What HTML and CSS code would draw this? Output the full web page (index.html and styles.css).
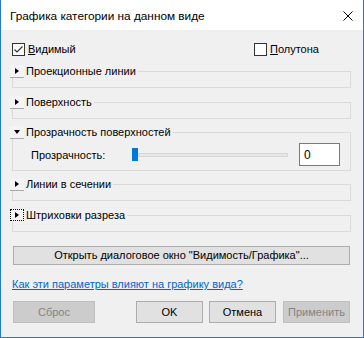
FILE: index.html
```html
<!DOCTYPE html>
<html lang="ru">
<head>
<meta charset="utf-8">
<title>Графика категории на данном виде</title>
<link rel="stylesheet" href="styles.css">
</head>
<body>
<div class="window">
  <div class="titlebar">
    <span class="title">Графика категории на данном виде</span>
    <svg class="close" width="10" height="10" viewBox="0 0 10 10"><path d="M0.5 0.5L9.5 9.5M9.5 0.5L0.5 9.5" stroke="#000" stroke-width="1" fill="none"/></svg>
  </div>
  <div class="content">
    <div class="checks">
      <label class="check">
        <span class="box"><svg width="11" height="11" viewBox="0 0 11 11"><path d="M1.5 5.5L4 8L9.5 2.5" stroke="#333" stroke-width="1.2" fill="none"/></svg></span>
        <span><u>В</u>идимый</span>
      </label>
      <label class="check">
        <span class="box"></span>
        <span><u>П</u>олутона</span>
      </label>
    </div>

    <fieldset class="group">
      <legend><span class="tog"><span class="tri-r"></span></span>Проекционные линии</legend>
    </fieldset>

    <fieldset class="group">
      <legend><span class="tog"><span class="tri-r"></span></span>Поверхность</legend>
    </fieldset>

    <fieldset class="group open tight">
      <legend><span class="tog"><span class="tri-d"></span></span>Прозрачность поверхностей</legend>
      <div class="slider-row">
        <span class="slider-label">Прозрачность:</span>
        <div class="slider">
          <span class="thumb"></span>
          <span class="track"></span>
        </div>
        <div class="numbox">0</div>
      </div>
    </fieldset>

    <fieldset class="group tight">
      <legend><span class="tog"><span class="tri-r"></span></span>Линии в сечении</legend>
    </fieldset>

    <fieldset class="group">
      <legend><span class="tog focus"><span class="tri-r"></span></span>Штриховки разреза</legend>
    </fieldset>

    <div class="btn wide">Открыть диалоговое окно "Видимость/Графика"...</div>

    <div class="link-row"><span class="link">Как эти параметры влияют на графику вида?</span></div>

    <div class="actions">
      <div class="btn disabled reset">Сброс</div>
      <div class="spacer"></div>
      <div class="btn ok">OK</div>
      <div class="btn cancel">Отмена</div>
      <div class="btn disabled apply">Применить</div>
    </div>
  </div>
</div>
</body>
</html>
```
FILE: styles.css
```css
* { box-sizing: border-box; }
html, body { margin: 0; padding: 0; }
body {
  width: 364px;
  height: 338px;
  font-family: "Segoe UI", "Liberation Sans", Arial, sans-serif;
  font-size: 11px;
  color: #000;
  background: #f0f0f0;
}
.window {
  width: 364px;
  height: 338px;
  border: 1px solid #1f7ad2;
  border-top: none;
  background: #f0f0f0;
  display: flex;
  flex-direction: column;
}
.titlebar {
  height: 30px;
  background: #fff;
  display: flex;
  align-items: center;
  padding: 0 10px 0 9px;
}
.title {
  flex: 1;
  font-size: 11.8px;
  line-height: 16px;
  padding-top: 1px;
}
.close { display: block; margin-top: 1px; }

.content {
  padding: 11px 12px 0 11px;
  display: flex;
  flex-direction: column;
}
.checks {
  display: grid;
  grid-template-columns: 242px auto;
  height: 16px;
}
.check {
  display: flex;
  align-items: center;
  gap: 3px;
  line-height: 16px;
}
.box {
  width: 13px;
  height: 13px;
  border: 1px solid #333;
  background: #fff;
  display: flex;
  align-items: center;
  justify-content: center;
}
.box svg { display: block; }

.group {
  margin: 7px 0 0 0;
  padding: 0 0 9px 0;
  border: 1px solid #dadada;
  min-width: 0;
}
.group.tight { margin-top: 6px; }
.group legend {
  padding: 0 2px 0 0;
  margin-left: -3px;
  display: flex;
  align-items: center;
  line-height: 14px;
  height: 14px;
}
.tog {
  width: 14px;
  height: 13px;
  margin-right: 2px;
  border-bottom: 1px solid #a8a8a8;
  background: #f4f4f4;
  display: flex;
  align-items: center;
  justify-content: center;
}
.tog.focus {
  border: 1px dotted #000;
  height: 12px;
}
.tri-r {
  width: 0; height: 0;
  border-top: 3.5px solid transparent;
  border-bottom: 3.5px solid transparent;
  border-left: 4px solid #000;
}
.tri-d {
  width: 0; height: 0;
  border-left: 3.5px solid transparent;
  border-right: 3.5px solid transparent;
  border-top: 4px solid #000;
}

.group.open { padding: 4px 0 4px 0; }
.slider-row {
  display: flex;
  align-items: center;
  height: 23px;
  padding-left: 18px;
}
.slider-label { width: 101px; }
.slider {
  width: 156px;
  height: 13px;
  display: flex;
  align-items: center;
}
.track {
  flex: 1;
  height: 4px;
  background: #e7e7e7;
  border: 1px solid #d6d6d6;
}
.thumb {
  width: 6px;
  height: 13px;
  background: #0078d7;
}
.numbox {
  margin-left: 11px;
  width: 41px;
  height: 23px;
  border: 1px solid #7a7a7a;
  background: #fff;
  padding: 3px 0 0 4px;
  line-height: 16px;
  font-size: 12px;
}

.btn {
  background: #e1e1e1;
  border: 1px solid #adadad;
  text-align: center;
}
.btn.wide {
  margin: 14px 1px 0 1px;
  height: 19px;
  line-height: 17px;
}
.link-row {
  margin-top: 11px;
  line-height: 16px;
  height: 16px;
}
.link {
  color: #0066cc;
  text-decoration: underline;
}
.actions {
  margin-top: 9px;
  display: flex;
  padding: 0 1px;
}
.actions .btn {
  height: 22px;
  line-height: 20px;
  width: 67px;
}
.actions .btn.reset { width: 82px; }
.actions .btn.cancel { margin-left: 6px; }
.actions .btn.apply { margin-left: 7px; }
.spacer { flex: 1; }
.btn.disabled {
  background: #cccccc;
  border-color: #bfbfbf;
  color: #838383;
}
```
